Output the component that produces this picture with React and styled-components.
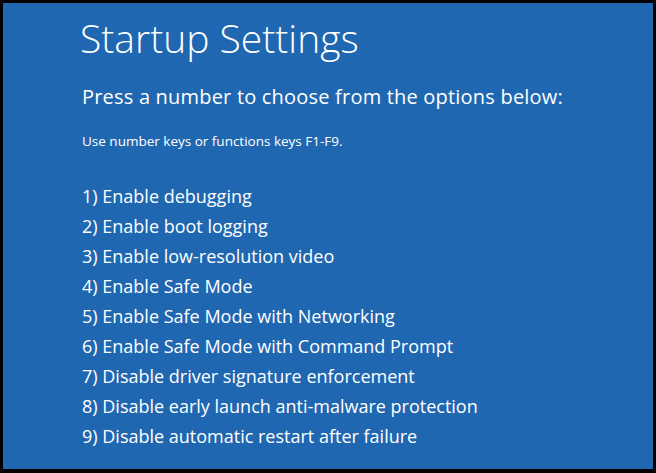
import styled, { createGlobalStyle } from "styled-components";

const GlobalStyle = createGlobalStyle`
  html, body {
    margin: 0;
    padding: 0;
    background: #000;
  }
  * {
    box-sizing: border-box;
  }
`;

const Screen = styled.main`
  width: 656px;
  height: 473px;
  background: #000;
  padding: 3px 3px 4px 3px;
`;

const Panel = styled.div`
  height: 100%;
  background: #2067b1;
  color: #fff;
  font-family: "Open Sans", "Noto Sans", sans-serif;
  padding: 11px 0 0 77px;
  display: flex;
  flex-direction: column;
`;

const Title = styled.h1`
  margin: 0;
  font-size: 39px;
  font-weight: 300;
  line-height: 48px;
`;

const Subtitle = styled.div`
  margin: 23px 0 0 2px;
  font-size: 20px;
  letter-spacing: 0.2px;
  line-height: 24px;
`;

const Hint = styled.div`
  margin: 23px 0 0 2px;
  font-size: 13.5px;
  line-height: 18px;
`;

const Options = styled.ol`
  list-style: none;
  margin: 31px 0 0 2px;
  padding: 0;
`;

const Option = styled.li`
  font-size: 18px;
  line-height: 30px;
`;

const options = [
  "Enable debugging",
  "Enable boot logging",
  "Enable low-resolution video",
  "Enable Safe Mode",
  "Enable Safe Mode with Networking",
  "Enable Safe Mode with Command Prompt",
  "Disable driver signature enforcement",
  "Disable early launch anti-malware protection",
  "Disable automatic restart after failure",
];

const App = () => {
  return (
    <>
      <GlobalStyle />
      <Screen>
        <Panel>
          <Title>Startup Settings</Title>
          <Subtitle>Press a number to choose from the options below:</Subtitle>
          <Hint>Use number keys or functions keys F1-F9.</Hint>
          <Options>
            {options.map((text, i) => (
              <Option key={i}>
                {i + 1}) {text}
              </Option>
            ))}
          </Options>
        </Panel>
      </Screen>
    </>
  );
};

export default App;
